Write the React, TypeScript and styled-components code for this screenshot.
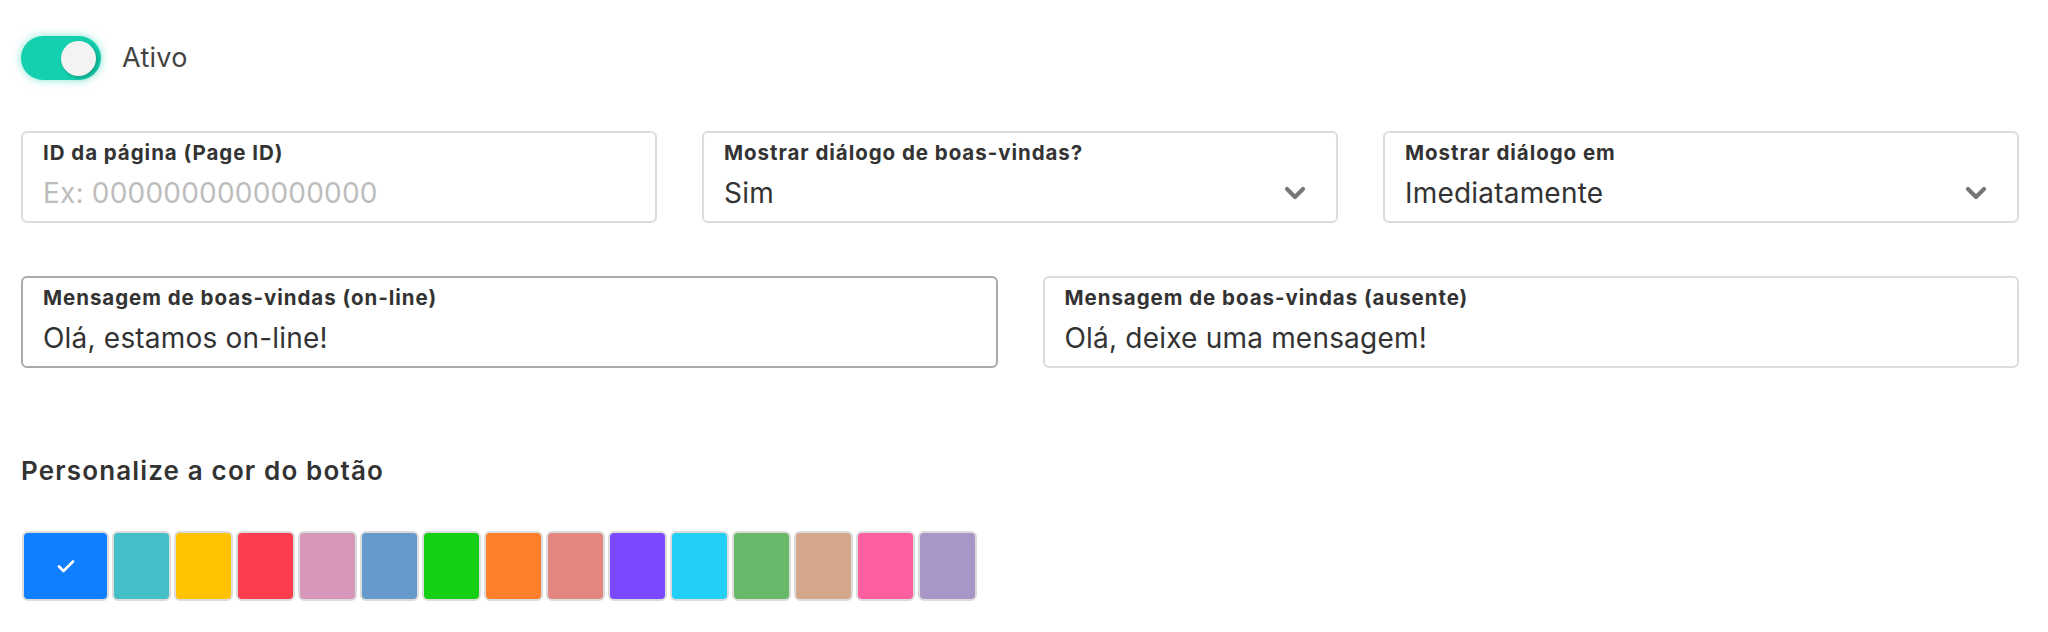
import React from 'react'
import styled, { createGlobalStyle } from 'styled-components'

const GlobalStyle = createGlobalStyle`
  html, body {
    margin: 0;
    padding: 0;
    background: #fff;
  }
  body {
    font-family: Inter, "Noto Sans", "Liberation Sans", sans-serif;
    color: #333;
  }
`

const Page = styled.div`
  padding: 36px 29px 0 21px;
`

const ToggleRow = styled.label`
  display: flex;
  align-items: center;
  gap: 21px;
  height: 44px;
`

const Track = styled.span<{ on: boolean }>`
  position: relative;
  display: inline-block;
  width: 80px;
  height: 44px;
  border-radius: 22px;
  background: ${p => (p.on ? '#14d0ae' : '#ccc')};
  box-shadow: ${p => (p.on ? '0 0 9px rgba(20, 208, 174, 0.55)' : 'none')};
`

const Knob = styled.span<{ on: boolean }>`
  position: absolute;
  top: 5px;
  left: ${p => (p.on ? '40px' : '5px')};
  width: 35px;
  height: 35px;
  border-radius: 50%;
  background: #f3f3f3;
  box-shadow: 2px 2px 4px rgba(0, 0, 0, 0.25);
`

const ToggleText = styled.span`
  font-size: 27px;
  letter-spacing: 0.3px;
  color: #444;
  line-height: 32px;
`

const FieldGrid = styled.div<{ cols: number; top: number }>`
  display: grid;
  grid-template-columns: repeat(${p => p.cols}, 1fr);
  column-gap: 45px;
  margin-top: ${p => p.top}px;
`

const FieldBox = styled.div<{ focused?: boolean }>`
  position: relative;
  box-sizing: border-box;
  height: 92px;
  padding: 8px 20px 0 20px;
  border: 2px solid ${p => (p.focused ? '#a9a9a9' : '#dcdcdc')};
  border-radius: 6px;
  background: #fff;
`

const FieldLabel = styled.div`
  font-size: 20.5px;
  line-height: 24px;
  font-weight: 700;
  color: #333;
  letter-spacing: 0.95px;
`

const FieldInput = styled.input`
  display: block;
  box-sizing: border-box;
  width: 100%;
  margin: 10px 0 0;
  padding: 0;
  border: none;
  outline: none;
  background: transparent;
  font-family: inherit;
  font-size: 28px;
  letter-spacing: 0.2px;
  line-height: 36px;
  height: 36px;
  color: #333;

  &::placeholder {
    color: #bdbdbd;
  }
`

const SelectValue = styled.div`
  display: flex;
  align-items: center;
  justify-content: space-between;
  margin-top: 10px;
  height: 36px;
  font-size: 28px;
  letter-spacing: 0.2px;
  line-height: 36px;
  color: #333;
  padding-right: 10px;
`

const Chevron = () => (
  <svg width="22" height="14" viewBox="0 0 22 14">
    <path
      d="M3 3 L11 11 L19 3"
      fill="none"
      stroke="#777"
      strokeWidth="4.2"
      strokeLinecap="round"
      strokeLinejoin="round"
    />
  </svg>
)

const SectionTitle = styled.h3`
  margin: 88px 0 0;
  font-size: 26px;
  line-height: 30px;
  font-weight: 600;
  letter-spacing: 1.15px;
  color: #333;
`

const Swatches = styled.div`
  display: flex;
  gap: 3px;
  margin-top: 45px;
  margin-left: 1px;
`

const Swatch = styled.button<{ color: string; selected?: boolean }>`
  display: flex;
  align-items: center;
  justify-content: center;
  box-sizing: border-box;
  width: ${p => (p.selected ? '87px' : '59px')};
  height: 70px;
  padding: 0;
  border: 2px solid #dcdcdc;
  border-radius: 6px;
  background: ${p => p.color};
  cursor: pointer;
`

const Check = () => (
  <svg width="18" height="14" viewBox="0 0 18 14">
    <path
      d="M2 7.5 L6.5 12 L16 2.5"
      fill="none"
      stroke="#fff"
      strokeWidth="2.6"
      strokeLinecap="round"
      strokeLinejoin="round"
    />
  </svg>
)

const colors = [
  '#0f7fff',
  '#45bfc7',
  '#ffc300',
  '#fc3d4e',
  '#d697ba',
  '#669acb',
  '#15cf15',
  '#ff7f2b',
  '#e38680',
  '#7b49ff',
  '#22cff5',
  '#68b869',
  '#d4a78b',
  '#ff5fa0',
  '#a897c6',
]

export default function App() {
  const active = true
  return (
    <>
      <GlobalStyle />
      <Page>
        <ToggleRow>
          <Track on={active}>
            <Knob on={active} />
          </Track>
          <ToggleText>Ativo</ToggleText>
        </ToggleRow>

        <FieldGrid cols={3} top={51}>
          <FieldBox>
            <FieldLabel>ID da página (Page ID)</FieldLabel>
            <FieldInput placeholder="Ex: 0000000000000000" />
          </FieldBox>
          <FieldBox>
            <FieldLabel>Mostrar diálogo de boas-vindas?</FieldLabel>
            <SelectValue>
              <span>Sim</span>
              <Chevron />
            </SelectValue>
          </FieldBox>
          <FieldBox>
            <FieldLabel>Mostrar diálogo em</FieldLabel>
            <SelectValue>
              <span>Imediatamente</span>
              <Chevron />
            </SelectValue>
          </FieldBox>
        </FieldGrid>

        <FieldGrid cols={2} top={53}>
          <FieldBox focused>
            <FieldLabel>Mensagem de boas-vindas (on-line)</FieldLabel>
            <FieldInput defaultValue="Olá, estamos on-line!" />
          </FieldBox>
          <FieldBox>
            <FieldLabel>Mensagem de boas-vindas (ausente)</FieldLabel>
            <FieldInput defaultValue="Olá, deixe uma mensagem!" />
          </FieldBox>
        </FieldGrid>

        <SectionTitle>Personalize a cor do botão</SectionTitle>
        <Swatches>
          {colors.map((c, i) => (
            <Swatch key={c} color={c} selected={i === 0}>
              {i === 0 && <Check />}
            </Swatch>
          ))}
        </Swatches>
      </Page>
    </>
  )
}
